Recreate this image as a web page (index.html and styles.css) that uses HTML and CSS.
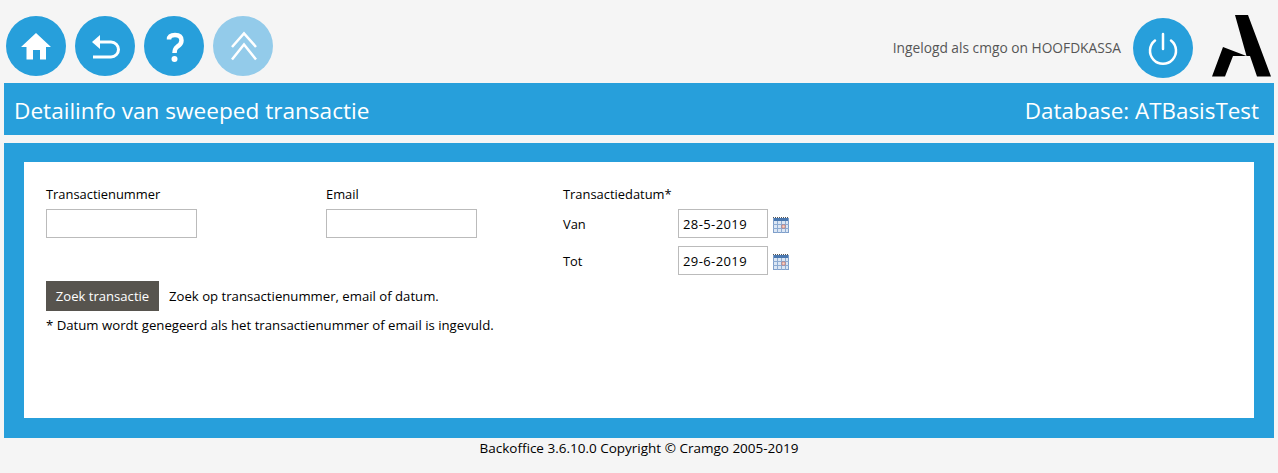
FILE: index.html
```html
<!DOCTYPE html>
<html lang="en">
<head>
    <meta charset="UTF-8">
    <title>Detailinfo van sweeped transactie</title>
    <link rel="stylesheet" href="styles.css">
</head>
<body>
    <div class="topbar">
        <div class="nav-buttons">
            <a class="round-button" href="#">
                <svg viewBox="0 0 60 60" width="60" height="60"><path fill="#fff" d="M30 17 L45 31 L40 31 L40 43.500 L34 43.500 L34 34 L27 34 L27 43.500 L20.500 43.500 L20.500 31 L15 31 Z"/></svg>
            </a>
            <a class="round-button" href="#">
                <svg viewBox="0 0 60 60" width="60" height="60"><path fill="none" stroke="#fff" stroke-width="3" d="M23 26 H36 A7.500 7.500 0 0 1 36 41 H18"/><path fill="#fff" d="M17 26 L25 19 L25 33 Z"/></svg>
            </a>
            <a class="round-button" href="#">
                <svg viewBox="0 0 60 60" width="60" height="60"><path fill="none" stroke="#fff" stroke-width="4.500" d="M25 23.500 Q25 19 31 19 Q37.500 19 37.500 24.500 Q37.500 28 33.500 30.500 Q30.500 32.500 30.500 37"/><circle cx="30.500" cy="43" r="3" fill="#fff"/></svg>
            </a>
            <a class="round-button faded" href="#">
                <svg viewBox="0 0 60 60" width="60" height="60"><path fill="none" stroke="#fff" stroke-width="2.500" d="M19 31 L31 17.500 L43 31 M19 43.500 L31 28.500 L43 43.500"/></svg>
            </a>
        </div>
        <div class="user-info">
            <span class="user-text">Ingelogd als cmgo on HOOFDKASSA</span>
            <a class="round-button" href="#">
                <svg viewBox="0 0 60 60" width="60" height="60"><path fill="none" stroke="#fff" stroke-width="2.500" stroke-linecap="round" d="M22 22.500 A13 13 0 1 0 38 22.500"/><path fill="none" stroke="#fff" stroke-width="2.500" stroke-linecap="round" d="M30 16 V31"/></svg>
            </a>
            <svg class="logo" viewBox="0 0 60 62" width="60" height="62"><path fill="#000" d="M23 0 L36 0 L59 61.600 L45 61.600 L38 41 L21 41 L13 61.600 L0 61.600 L11 32 L34.500 41 Z"/></svg>
        </div>
    </div>

    <div class="title-bar">
        <h1>Detailinfo van sweeped transactie</h1>
        <div class="database">Database: ATBasisTest</div>
    </div>

    <div class="panel">
        <div class="panel-inner">
            <div class="fields">
                <div class="field field-number">
                    <label>Transactienummer</label>
                    <input class="text-input" type="text">
                </div>
                <div class="field field-email">
                    <label>Email</label>
                    <input class="text-input" type="text">
                </div>
                <div class="field">
                    <label>Transactiedatum*</label>
                    <div class="date-row">
                        <span class="date-label">Van</span>
                        <input class="date-input" type="text" value="28-5-2019">
                        <svg class="calendar" viewBox="0 0 16 16" width="16" height="16"><path stroke="#555" stroke-dasharray="1 1" d="M0 0.500H16"/><rect x="0.500" y="1.500" width="15" height="14" fill="#dbe6f4" stroke="#7f9fca"/><rect x="1" y="1" width="14" height="3" fill="#4a78b0"/><path stroke="#8dabd2" d="M0 7.500H16M0 11.500H16M4.500 4V16M8.500 4V16M12.500 4V16"/><rect x="9" y="8" width="3" height="3" fill="#f0d8d0" stroke="#d8553f" stroke-width="0.500"/></svg>
                    </div>
                    <div class="date-row">
                        <span class="date-label">Tot</span>
                        <input class="date-input" type="text" value="29-6-2019">
                        <svg class="calendar" viewBox="0 0 16 16" width="16" height="16"><path stroke="#555" stroke-dasharray="1 1" d="M0 0.500H16"/><rect x="0.500" y="1.500" width="15" height="14" fill="#dbe6f4" stroke="#7f9fca"/><rect x="1" y="1" width="14" height="3" fill="#4a78b0"/><path stroke="#8dabd2" d="M0 7.500H16M0 11.500H16M4.500 4V16M8.500 4V16M12.500 4V16"/><rect x="9" y="8" width="3" height="3" fill="#f0d8d0" stroke="#d8553f" stroke-width="0.500"/></svg>
                    </div>
                </div>
            </div>
            <div class="search-row">
                <button class="search-button" type="button">Zoek transactie</button>
                <span class="search-hint">Zoek op transactienummer, email of datum.</span>
            </div>
            <p class="note">* Datum wordt genegeerd als het transactienummer of email is ingevuld.</p>
        </div>
    </div>

    <div class="footer">Backoffice 3.6.10.0 Copyright © Cramgo 2005-2019</div>
</body>
</html>
```

FILE: styles.css
```css
* {
    margin: 0;
    padding: 0;
    box-sizing: border-box;
    font-family: "Open Sans", "Noto Sans", sans-serif;
}

body {
    background: #f5f5f5;
    color: #000;
    font-size: 12.900px;
    padding: 0 4px;
    height: 473px;
    overflow: hidden;
}

.topbar {
    height: 83px;
    display: flex;
    justify-content: space-between;
}

.nav-buttons {
    display: flex;
    gap: 9px;
    padding: 16px 0 0 2px;
}

.round-button {
    display: block;
    width: 60px;
    height: 60px;
    border-radius: 50%;
    background: #279fdb;
}

.round-button svg {
    display: block;
}

.round-button.faded {
    background: #93cbea;
}

.user-info {
    display: flex;
    padding-top: 18px;
}

.user-text {
    color: #555;
    font-size: 13.750px;
    margin: 20px 12px 0 0;
}

.logo {
    margin: -3px 2px 0 19px;
}

.title-bar {
    height: 52px;
    background: #279fdb;
    color: #fff;
    display: flex;
    justify-content: space-between;
    align-items: center;
    padding: 3px 15px 0 10px;
    font-size: 22.400px;
}

.title-bar h1 {
    font-size: 22.600px;
    font-weight: normal;
}

.panel {
    margin-top: 8px;
    height: 295px;
    background: #279fdb;
    padding: 19px 20px 20px;
}

.panel-inner {
    height: 256px;
    background: #fff;
    padding: 23px 22px 0;
}

.fields {
    display: flex;
    height: 96px;
}

.field label {
    display: block;
    height: 24px;
}

.field-number {
    width: 280px;
}

.field-email {
    width: 237px;
}

.text-input {
    display: block;
    width: 151px;
    height: 29px;
    border: 1px solid #bbb;
    background: #fff;
}

.date-row {
    display: flex;
    align-items: center;
    height: 29px;
    margin-bottom: 8px;
}

.date-label {
    width: 115px;
    padding-top: 1px;
}

.date-input {
    width: 90px;
    height: 29px;
    border: 1px solid #bbb;
    padding: 1px 4px 0;
    font-size: 13px;
    letter-spacing: 0.400px;
    color: #000;
}

.calendar {
    margin: 3px 0 0 5px;
}

.search-row {
    display: flex;
    align-items: center;
    gap: 10px;
}

.search-button {
    height: 30px;
    width: 113px;
    background: #57544e;
    color: #fff;
    border: none;
    font-size: 13.100px;
}

.search-hint {
    font-size: 13.170px;
}

.note {
    margin-top: 5px;
    font-size: 13.200px;
}

.footer {
    text-align: center;
    margin-top: 1px;
    line-height: 18px;
    font-size: 13.500px;
}
```
